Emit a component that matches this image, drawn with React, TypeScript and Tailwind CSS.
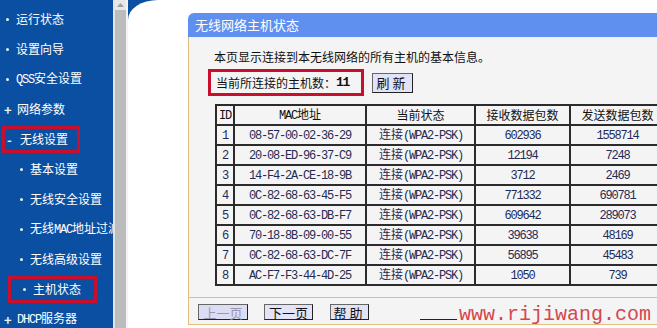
import React from "react";

const cjk = "font-['Noto_Sans_CJK_SC',sans-serif]";
const mono = "font-['Liberation_Mono','Noto_Sans_CJK_SC',monospace] tracking-[-1.2px]";

function M({ children }: { children: React.ReactNode }) {
  return <span className={mono}>{children}</span>;
}

type NavItem = {
  label: React.ReactNode;
  mark: "dot" | "plus" | "minus";
  sub?: boolean;
  boxed?: boolean;
};

const nav: NavItem[] = [
  { label: "运行状态", mark: "dot" },
  { label: "设置向导", mark: "dot" },
  { label: <><M>QSS</M>安全设置</>, mark: "dot" },
  { label: "网络参数", mark: "plus" },
  { label: "无线设置", mark: "minus", boxed: true },
  { label: "基本设置", mark: "dot", sub: true },
  { label: "无线安全设置", mark: "dot", sub: true },
  { label: <>无线<M>MAC</M>地址过滤</>, mark: "dot", sub: true },
  { label: "无线高级设置", mark: "dot", sub: true },
  { label: "主机状态", mark: "dot", sub: true, boxed: true },
  { label: <><M>DHCP</M>服务器</>, mark: "plus" },
];

const hosts = [
  ["1", "08-57-00-02-36-29", "602936", "1558714"],
  ["2", "20-08-ED-96-37-C9", "12194", "7248"],
  ["3", "14-F4-2A-CE-18-9B", "3712", "2469"],
  ["4", "0C-82-68-63-45-F5", "771332", "690781"],
  ["5", "0C-82-68-63-DB-F7", "609642", "289073"],
  ["6", "70-18-8B-09-00-55", "39638", "48169"],
  ["7", "0C-82-68-63-DC-7F", "56895", "45483"],
  ["8", "AC-F7-F3-44-4D-25", "1050", "739"],
];

function Mark({ kind }: { kind: NavItem["mark"] }) {
  if (kind === "plus") return <span className="w-[8px] text-[13px] font-bold leading-none text-[#e8f4e0]">+</span>;
  if (kind === "minus") return <span className="w-[8px] text-[13px] font-bold leading-none text-[#e8f4e0]">-</span>;
  return <span className="mx-[2px] h-[3px] w-[3px] rounded-full bg-[#e8f4e0]" />;
}

function Sidebar() {
  return (
    <div className={`w-[113px] shrink-0 overflow-hidden bg-[#0b4fa3] pt-[4px] text-[12px] text-white ${cjk}`}>
      {nav.map((n, i) => (
        <div key={i} className={`flex h-[30px] items-center whitespace-nowrap ${n.sub ? "pl-[8px]" : "pl-[2px]"}`}>
          <div
            className={`flex h-[27px] items-center gap-[5px] ${n.sub ? "pl-[10px]" : "pl-[2px]"} ${
              n.boxed ? `border-[3px] border-[#c8102e] ${n.sub ? "w-[89px] pl-[7px]" : "w-[78px] pl-0"}` : ""
            }`}
          >
            <Mark kind={n.mark} />
            <span>{n.label}</span>
          </div>
        </div>
      ))}
    </div>
  );
}

function Scrollbar() {
  return (
    <div className="flex w-[15px] shrink-0 flex-col border-l-2 border-r-2 border-l-[#e4e4e4] border-r-[#f4f4f4] bg-[#bcbcbc]">
      <div className="flex h-[10px] items-center justify-center bg-[#e8e8e8]">
        <svg width="7" height="4" viewBox="0 0 7 4">
          <path d="M0 4 L3.5 0 L7 4 Z" fill="#a0a0a0" />
        </svg>
      </div>
    </div>
  );
}

function Btn({ children, disabled, w }: { children: React.ReactNode; disabled?: boolean; w: string }) {
  return (
    <button
      className={`flex h-[16px] items-center justify-center border border-t-[#666] border-l-[#666] border-b-[#222] border-r-[#222] text-[13px] leading-none ${w} ${
        disabled ? "bg-[#dcdcf2] text-[#9898b4]" : "bg-[#e2e2f8] text-[#111]"
      }`}
    >
      {children}
    </button>
  );
}

const cell = "border-2 border-[#2b2b2b] h-[20px] p-0 text-center leading-none";

export default function App() {
  return (
    <div className={`relative flex h-[328px] w-[657px] overflow-hidden bg-white ${cjk}`}>
      <Sidebar />
      <Scrollbar />
      <div className="flex-1 bg-[#0b4fa3]">
        <div className="h-full rounded-tl-[30px_20px] bg-white pl-[60px] pt-[13px]">
          <div className="w-[520px]">
            <div className="flex h-[24px] items-center rounded-tl-[6px] bg-[#5f90ef] pl-[7px] text-[13px] text-white">
              无线网络主机状态
            </div>
            <div className="border-b border-l border-[#e3bf7c] bg-[#f4f4f4]">
              <div className="h-[2px] bg-[#eef3fb]" />
              <div className="pl-[25px] pt-[11px] text-[12px] leading-[14px] text-[#111]">
                本页显示连接到本无线网络的所有主机的基本信息。
              </div>
              <div className="mt-[5px] flex items-center pl-[19px]">
                <div className="flex h-[27px] w-[156px] items-center border-[3px] border-[#c8102e] pl-[5px] text-[12px] text-[#111]">
                  当前所连接的主机数：<span className={`${mono} text-[13px] font-bold`}>11</span>
                </div>
                <div className="ml-[8px]">
                  <Btn w="w-[41px] h-[20px] tracking-[3px]">刷新</Btn>
                </div>
              </div>
              <table className="ml-[26px] mt-[8px] border-collapse border-2 border-[#2b2b2b] text-[12px] text-[#1f2b55]">
                <thead>
                  <tr className="text-[#111]">
                    <td className={`${cell} w-[18px]`}><M>ID</M></td>
                    <td className={`${cell} w-[132px]`}><M>MAC</M>地址</td>
                    <td className={`${cell} w-[109px]`}>当前状态</td>
                    <td className={`${cell} w-[95px]`}>接收数据包数</td>
                    <td className={`${cell} w-[95px]`}>发送数据包数</td>
                  </tr>
                </thead>
                <tbody>
                  {hosts.map((h) => (
                    <tr key={h[0]}>
                      <td className={cell}><M>{h[0]}</M></td>
                      <td className={cell}><M>{h[1]}</M></td>
                      <td className={`${cell} text-left pl-[12px]`}>连接<M>(WPA2-PSK)</M></td>
                      <td className={cell}><M>{h[2]}</M></td>
                      <td className={cell}><M>{h[3]}</M></td>
                    </tr>
                  ))}
                </tbody>
              </table>
              <div className="mt-[11px] border-t border-[#e3bf7c] pl-[9px] pt-[6px] pb-[4px]">
                <div className="flex items-center">
                  <Btn disabled w="w-[50px]">上一页</Btn>
                  <div className="ml-[16px]"><Btn w="w-[49px]">下一页</Btn></div>
                  <div className="ml-[17px]"><Btn w="w-[39px] tracking-[3px]">帮助</Btn></div>
                </div>
              </div>
            </div>
          </div>
        </div>
      </div>
      <div className="absolute left-[420px] top-[319px] h-[1px] w-[37px] bg-[#222]" />
      <div className="absolute left-[459px] top-[303px] font-['Liberation_Mono',monospace] text-[20px] leading-[24px] text-[#d5474f]">
        www.rijiwang.com
      </div>
    </div>
  );
}
